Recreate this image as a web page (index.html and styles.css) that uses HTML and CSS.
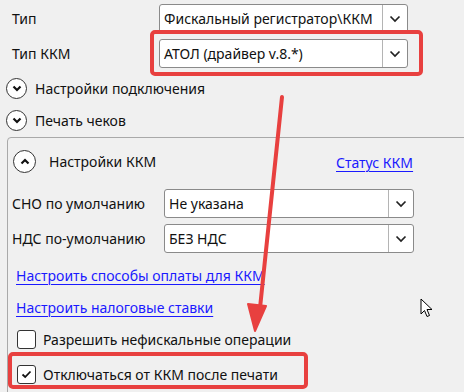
FILE: index.html
```html
<!DOCTYPE html>
<html lang="ru">
<head>
    <meta charset="UTF-8">
    <title>Настройки ККМ</title>
    <link rel="stylesheet" href="styles.css">
</head>
<body>
    <div class="page">
        <div class="field-row top-row">
            <span class="label">Тип</span>
            <div class="combo">
                <span class="combo-value">Фискальный регистратор\ККМ</span>
                <span class="combo-btn"><svg width="12" height="8" viewBox="0 0 12 8"><path d="M1.5 1.5 L6 6 L10.5 1.5" fill="none" stroke="#222" stroke-width="1.7"/></svg></span>
            </div>
        </div>
        <div class="field-row top-row">
            <span class="label">Тип ККМ</span>
            <div class="combo">
                <span class="combo-value">АТОЛ (драйвер v.8.*)</span>
                <span class="combo-btn"><svg width="12" height="8" viewBox="0 0 12 8"><path d="M1.5 1.5 L6 6 L10.5 1.5" fill="none" stroke="#222" stroke-width="1.7"/></svg></span>
            </div>
        </div>

        <div class="expander first">
            <span class="exp-btn"><svg width="10" height="7" viewBox="0 0 10 7"><path d="M1.5 1.5 L5 5 L8.5 1.5" fill="none" stroke="#111" stroke-width="2.2"/></svg></span>
            <span>Настройки подключения</span>
        </div>
        <div class="expander">
            <span class="exp-btn"><svg width="10" height="7" viewBox="0 0 10 7"><path d="M1.5 1.5 L5 5 L8.5 1.5" fill="none" stroke="#111" stroke-width="2.2"/></svg></span>
            <span>Печать чеков</span>
        </div>

        <div class="group">
            <div class="group-head">
                <div class="expander inner">
                    <span class="exp-btn big"><svg width="10" height="7" viewBox="0 0 10 7"><path d="M1.5 5.5 L5 2 L8.5 5.5" fill="none" stroke="#111" stroke-width="2.2"/></svg></span>
                    <span>Настройки ККМ</span>
                </div>
                <a class="link status" href="#">Статус ККМ</a>
            </div>

            <div class="field-row group-row">
                <span class="label">СНО по умолчанию</span>
                <div class="combo">
                    <span class="combo-value">Не указана</span>
                    <span class="combo-btn"><svg width="12" height="8" viewBox="0 0 12 8"><path d="M1.5 1.5 L6 6 L10.5 1.5" fill="none" stroke="#222" stroke-width="1.7"/></svg></span>
                </div>
            </div>
            <div class="field-row group-row">
                <span class="label">НДС по-умолчанию</span>
                <div class="combo">
                    <span class="combo-value">БЕЗ НДС</span>
                    <span class="combo-btn"><svg width="12" height="8" viewBox="0 0 12 8"><path d="M1.5 1.5 L6 6 L10.5 1.5" fill="none" stroke="#222" stroke-width="1.7"/></svg></span>
                </div>
            </div>

            <div class="link-row"><a class="link" href="#">Настроить способы оплаты для ККМ</a></div>
            <div class="link-row"><a class="link" href="#">Настроить налоговые ставки</a></div>

            <label class="check">
                <span class="box"></span>
                <span>Разрешить нефискальные операции</span>
            </label>
            <label class="check last">
                <span class="box"><svg width="11" height="9" viewBox="0 0 11 9"><path d="M1.5 4.5 L4.2 7 L9.5 1.5" fill="none" stroke="#111" stroke-width="1.8"/></svg></span>
                <span>Отключаться от ККМ после печати</span>
            </label>
        </div>

        <!-- annotation marks on top of the screenshot -->
        <div class="mark mark-type"></div>
        <div class="mark mark-check"></div>
        <svg class="arrow" width="464" height="392" viewBox="0 0 464 392">
            <path d="M282 97 L260 308" stroke="#e8403f" stroke-width="4" stroke-linecap="round" fill="none"/>
            <path d="M248 304 L255 331 L266 306 Z" fill="#e8403f" stroke="#e8403f" stroke-width="2" stroke-linejoin="round"/>
        </svg>
        <svg class="cursor" width="14" height="21" viewBox="0 0 14 21">
            <path d="M1 1 L1 16 L4.5 12.5 L7 18.5 L9.5 17.5 L7 11.5 L12 11.5 Z" fill="#fff" stroke="#000" stroke-width="1" stroke-linejoin="round"/>
        </svg>
    </div>
</body>
</html>
```

FILE: styles.css
```css
body {
    margin: 0;
    background-color: #f0f0f0;
    font-family: 'Noto Sans', 'Open Sans', sans-serif;
    font-size: 14px;
    color: #111;
    overflow: hidden;
}

.page {
    position: relative;
    width: 464px;
    height: 392px;
    padding-top: 4px;
    box-sizing: border-box;
    overflow: hidden;
}

.field-row {
    display: grid;
    align-items: center;
    margin-bottom: 6px;
}

.top-row {
    grid-template-columns: 147px 249px;
    padding-left: 12px;
}

.group-row {
    grid-template-columns: 152px 250px;
}

.label {
    white-space: nowrap;
}

.combo {
    display: flex;
    height: 29px;
    box-sizing: border-box;
    background-color: #fff;
    border: 1px solid #8a8a8a;
    border-radius: 3px;
}

.combo-value {
    flex: 1;
    padding-left: 4px;
    line-height: 27px;
    white-space: nowrap;
    overflow: hidden;
}

.combo-btn {
    width: 24px;
    border-left: 1px solid #b4b4b4;
    display: flex;
    align-items: center;
    justify-content: center;
}

.expander {
    display: flex;
    align-items: center;
    height: 32px;
    padding-left: 6px;
}

.expander.first {
    margin-top: -2px;
}

.exp-btn {
    width: 21px;
    height: 21px;
    box-sizing: border-box;
    border: 1.5px solid #333;
    border-radius: 50%;
    display: flex;
    align-items: center;
    justify-content: center;
    margin-right: 8px;
    background-color: #fff;
}

.exp-btn.big {
    width: 23px;
    height: 23px;
    margin-right: 13px;
}

.group {
    margin-left: 7px;
    margin-top: 1px;
    width: 480px;
    height: 260px;
    border: 1px solid #a9a9a9;
    border-radius: 4px;
    padding-left: 4px;
    box-sizing: border-box;
}

.group-head {
    display: flex;
    align-items: center;
    height: 46px;
    margin-bottom: 5px;
}

.expander.inner {
    padding-left: 1px;
    height: 46px;
    width: 323px;
}

.link {
    color: #1a1aff;
    text-decoration: underline;
    text-underline-offset: 3px;
    text-decoration-thickness: 1px;
}

.status {
    margin-top: 2px;
}

.link-row {
    height: 32px;
    display: flex;
    align-items: center;
    padding-left: 4px;
}

.link-row:first-of-type {
    margin-top: 2px;
}

.check {
    display: flex;
    align-items: center;
    height: 32px;
    padding-left: 5px;
}

.check.last {
    height: 36px;
    margin-top: 1px;
}

.box {
    width: 19px;
    height: 19px;
    box-sizing: border-box;
    border: 1px solid #333;
    border-radius: 3px;
    background-color: #fff;
    margin-right: 7px;
    display: flex;
    align-items: center;
    justify-content: center;
}

/* red annotation boxes, drawn over the form */
.mark {
    position: absolute;
    border: 4px solid #e8403f;
    border-radius: 5px;
    box-sizing: border-box;
}

.mark-type {
    left: 150px;
    top: 30px;
    width: 273px;
    height: 46px;
}

.mark-check {
    left: 8px;
    top: 352px;
    width: 300px;
    height: 37px;
}

.arrow {
    position: absolute;
    left: 0;
    top: 0;
}

.cursor {
    position: absolute;
    left: 420px;
    top: 298px;
}
```
